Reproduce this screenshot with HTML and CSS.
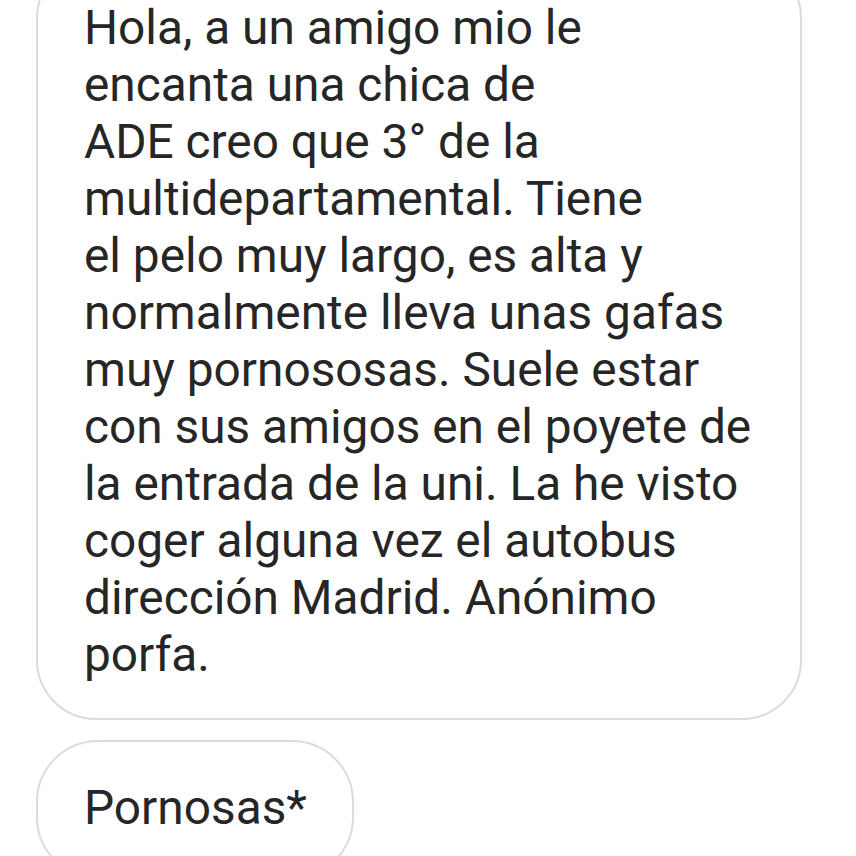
FILE: index.html
```html
<!DOCTYPE html>
<html lang="es">
<head>
<meta charset="utf-8">
<link rel="stylesheet" href="styles.css">
</head>
<body>
<div class="thread">
  <div class="bubble bubble-long">
    <p class="msg">Hola, a un amigo mio le<br>encanta una chica de<br>ADE creo que 3° de la<br>multidepartamental. Tiene<br>el pelo muy largo, es alta y<br>normalmente lleva unas gafas<br>muy pornososas. Suele estar<br>con sus amigos en el poyete de<br>la entrada de la uni. La he visto<br>coger alguna vez el autobus<br>dirección Madrid. Anónimo<br>porfa.</p>
  </div>
  <div class="bubble bubble-short">
    <p class="msg">Pornosas*</p>
  </div>
</div>
</body>
</html>
```
FILE: styles.css
```css
html, body {
  margin: 0;
  padding: 0;
  background: #ffffff;
  height: 856px;
  overflow: hidden;
}
.thread {
  display: flex;
  flex-direction: column;
  align-items: flex-start;
  gap: 20px;
  padding-left: 36px;
  margin-top: -42px;
}
.bubble {
  border: 2px solid #dbdbdb;
  background: #ffffff;
  box-sizing: border-box;
}
.bubble-long {
  width: 766px;
  border-radius: 60px;
  padding: 40px 20px 34px 46px;
}
.bubble-short {
  border-radius: 62px;
  padding: 38px 45px 40px 46px;
}
.msg {
  margin: 0;
  font-family: Roboto, "Noto Sans", sans-serif;
  font-size: 47.8px;
  line-height: 57px;
  color: #262626;
  white-space: nowrap;
}
```
